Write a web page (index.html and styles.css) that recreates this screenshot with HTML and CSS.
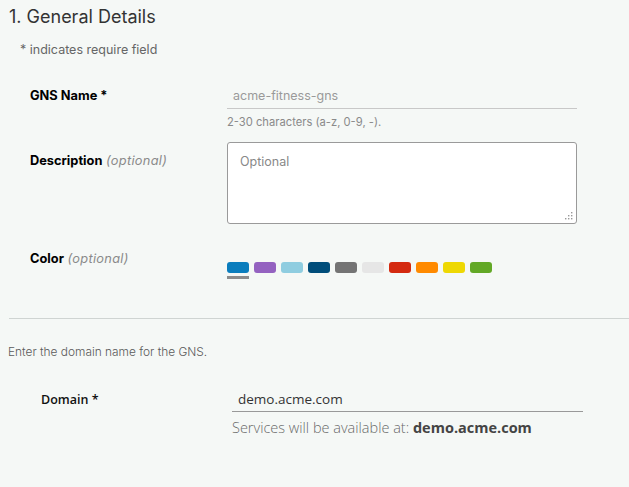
FILE: index.html
```html
<!DOCTYPE html>
<html>
<head>
<meta charset="utf-8">
<link rel="stylesheet" href="styles.css">
</head>
<body>
<div class="page">
  <section class="general">
    <h2 class="title">1. General Details</h2>
    <p class="req-note">* indicates require field</p>
    <div class="row row-name">
      <div class="label"><b>GNS Name *</b></div>
      <div class="control">
        <div class="input disabled">acme-fitness-gns</div>
        <div class="help">2-30 characters (a-z, 0-9, -).</div>
      </div>
    </div>
    <div class="row row-desc">
      <div class="label"><b>Description</b> <i>(optional)</i></div>
      <div class="control">
        <div class="textarea">Optional
          <svg class="grip" width="8" height="8" viewBox="0 0 8 8"><g fill="#999"><rect x="6" y="0" width="1.4" height="1.4"/><rect x="3" y="3" width="1.4" height="1.4"/><rect x="6" y="3" width="1.4" height="1.4"/><rect x="0" y="6" width="1.4" height="1.4"/><rect x="3" y="6" width="1.4" height="1.4"/><rect x="6" y="6" width="1.4" height="1.4"/></g></svg>
        </div>
      </div>
    </div>
    <div class="row row-color">
      <div class="label"><b>Color</b> <i>(optional)</i></div>
      <div class="control">
        <div class="swatches">
          <span class="sw selected c1"></span>
          <span class="sw c2"></span>
          <span class="sw c3"></span>
          <span class="sw c4"></span>
          <span class="sw c5"></span>
          <span class="sw c6"></span>
          <span class="sw c7"></span>
          <span class="sw c8"></span>
          <span class="sw c9"></span>
          <span class="sw c10"></span>
        </div>
      </div>
    </div>
  </section>
  <section class="domain">
    <p class="intro">Enter the domain name for the GNS.</p>
    <div class="drow">
      <div class="dlabel">Domain *</div>
      <div class="dcontrol">
        <div class="dinput">demo.acme.com</div>
        <div class="dhelp">Services will be available at: <b>demo.acme.com</b></div>
      </div>
    </div>
  </section>
</div>
</body>
</html>
```
FILE: styles.css
```css
html, body {
  margin: 0;
  padding: 0;
  background: #f5f8f6;
}
body {
  width: 629px;
  height: 487px;
  overflow: hidden;
  font-family: "Inter", "Noto Sans", sans-serif;
  color: #000;
}
.page {
  display: flex;
  flex-direction: column;
}
.general {
  height: 319px;
  border-bottom: 1px solid #cfd4d2;
  margin-left: 9px;
  box-sizing: border-box;
}
.title {
  margin: 5px 0 0 0;
  font-size: 18px;
  font-weight: 400;
  color: #333;
  line-height: 24px;
}
.req-note {
  margin: 13px 0 0 11px;
  font-size: 12.5px;
  color: #666;
  line-height: 16px;
}
.row {
  display: flex;
}
.label {
  width: 197px;
  padding-left: 21px;
  font-size: 12.8px;
  line-height: 16px;
  color: #000;
}
.label b { font-weight: 700; }
.label i { color: #8a8a8a; font-weight: 400; letter-spacing: 0.3px; }
.row-name { margin-top: 29px; }
.row-name .label { padding-top: 1px; }
.control { width: 350px; }
.input {
  height: 22px;
  line-height: 18px;
  font-size: 12.5px;
  padding-left: 6px;
  border-bottom: 1px solid #c8c8c8;
  box-sizing: border-box;
  color: #9a9a9a;
}
.help {
  margin-top: 5px;
  font-size: 11.2px;
  color: #8a8a8a;
  line-height: 16px;
}
.row-desc { margin-top: 12px; }
.row-desc .label { padding-top: 11px; }
.textarea {
  position: relative;
  height: 82px;
  box-sizing: border-box;
  background: #fff;
  border: 1px solid #9a9a9a;
  border-radius: 3px;
  padding: 11px 0 0 12px;
  font-size: 12.5px;
  color: #888;
  line-height: 16px;
}
.grip {
  position: absolute;
  right: 3px;
  bottom: 3px;
}
.row-color { margin-top: 27px; }
.row-color .label { padding-top: 0; }
.swatches {
  display: flex;
  gap: 5px;
  margin-top: 11px;
}
.sw {
  display: block;
  width: 22px;
  height: 11px;
  border-radius: 3px;
  position: relative;
}
.sw.selected::after {
  content: "";
  position: absolute;
  left: 0;
  top: 14px;
  width: 22px;
  height: 3px;
  background: #8c8c8c;
}
.c1 { background: #0a7dbd; }
.c2 { background: #9462c0; }
.c3 { background: #8fcde0; }
.c4 { background: #004d7a; }
.c5 { background: #747474; }
.c6 { background: #e6e6e6; }
.c7 { background: #d42a10; }
.c8 { background: #ff8a00; }
.c9 { background: #eed803; }
.c10 { background: #62a826; }

.domain {
  font-family: "Open Sans", sans-serif;
}
.intro {
  margin: 24px 0 0 8px;
  font-family: "Inter", sans-serif;
  font-size: 11.9px;
  color: #5a5a5a;
  font-weight: 300;
  line-height: 18px;
}
.drow {
  display: flex;
  margin-top: 30px;
}
.dlabel {
  width: 191px;
  padding-left: 41px;
  font-size: 12.5px;
  font-weight: 600;
  color: #111;
  line-height: 18px;
}
.dcontrol { width: 351px; }
.dinput {
  height: 21px;
  line-height: 17px;
  padding-left: 6px;
  font-size: 13.5px;
  color: #333;
  border-bottom: 1px solid #999;
  box-sizing: border-box;
}
.dhelp {
  margin-top: 7px;
  font-size: 14.5px;
  color: #6a6a6a;
  font-weight: 300;
  line-height: 18px;
}
.dhelp b { font-weight: 700; color: #444; }
```
